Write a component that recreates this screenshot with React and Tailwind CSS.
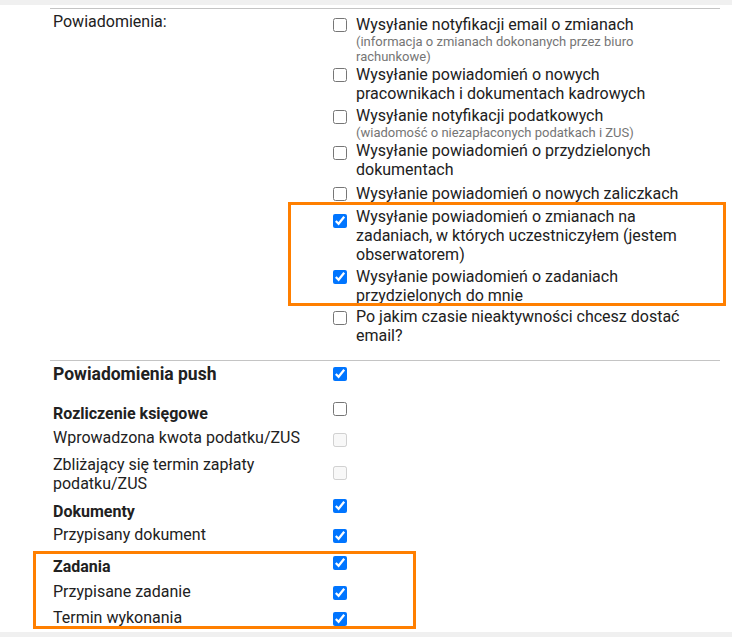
import React from 'react';

const emailRows = [
  { text: 'Wysyłanie notyfikacji email o zmianach', note: '(informacja o zmianach dokonanych przez biuro rachunkowe)', checked: false, mt: 'mt-[5.5px]', box: 'mt-[3.5px]' },
  { text: 'Wysyłanie powiadomień o nowych pracownikach i dokumentach kadrowych', checked: false, mt: 'mt-[1px]', box: 'mt-[3.5px]' },
  { text: 'Wysyłanie notyfikacji podatkowych', note: '(wiadomość o niezapłaconych podatkach i ZUS)', checked: false, mt: 'mt-[3.5px]', box: 'mt-[4px]' },
  { text: 'Wysyłanie powiadomień o przydzielonych dokumentach', checked: false, mt: 'mt-[1px]', box: 'mt-[5px]' },
  { text: 'Wysyłanie powiadomień o nowych zaliczkach', checked: false, mt: 'mt-[5px]', box: 'mt-[3px]' },
  { text: 'Wysyłanie powiadomień o zmianach na zadaniach, w których uczestniczyłem (jestem obserwatorem)', checked: true, mt: 'mt-[4px]', box: 'mt-[7px]' },
  { text: 'Wysyłanie powiadomień o zadaniach przydzielonych do mnie', checked: true, mt: 'mt-[2.5px]', box: 'mt-[3.5px]' },
  { text: 'Po jakim czasie nieaktywności chcesz dostać email?', checked: false, mt: 'mt-[2px]', box: 'mt-[4.5px]' },
];

const pushRows = [
  { label: 'Powiadomienia push', bold: true, big: true, checked: true, h: 'h-[38px]', pt: 'pt-[3px]', box: 'mt-[6px]' },
  { label: 'Rozliczenie księgowe', bold: true, checked: false, h: 'h-[26px]', pt: 'pt-[4.5px]', box: 'mt-[3px]' },
  { label: 'Wprowadzona kwota podatku/ZUS', disabled: true, h: 'h-[27px]', pt: 'pt-[2.5px]', box: 'mt-[8px]' },
  { label: 'Zbliżający się termin zapłaty podatku/ZUS', disabled: true, h: 'h-[45px]', pt: 'pt-[2.5px]', box: 'mt-[14px]' },
  { label: 'Dokumenty', bold: true, checked: true, h: 'h-[25px]', pt: 'pt-[4.5px]', box: 'mt-[2px]' },
  { label: 'Przypisany dokument', checked: true, h: 'h-[30px]', pt: 'pt-[2.5px]', box: 'mt-[7px]' },
  { label: 'Zadania', bold: true, checked: true, h: 'h-[27px]', pt: 'pt-[5px]', box: 'mt-[4px]' },
  { label: 'Przypisane zadanie', checked: true, h: 'h-[27px]', pt: 'pt-[2.5px]', box: 'mt-[7px]' },
  { label: 'Termin wykonania', checked: true, h: 'h-[26px]', pt: 'pt-[2px]', box: 'mt-[6px]' },
];

const Check = ({ checked, disabled, className }) => (
  <input
    type="checkbox"
    defaultChecked={checked}
    disabled={disabled}
    className={`m-0 w-[14px] h-[14px] shrink-0 accent-[#0075ff] ${className}`}
  />
);

export default function App() {
  return (
    <div className="w-[732px] min-h-[637px] bg-white text-[#212121] text-[16px] leading-[19px]" style={{ fontFamily: 'Roboto, "Liberation Sans", sans-serif' }}>
      <div className="h-[5px] bg-[#f0f0f0]" />
      <div className="ml-[50px] w-[670px]">
        <div className="h-[3px]" />
        <div className="h-px bg-[#c4c4c4]" />

        {/* Email notifications */}
        <div className="relative flex h-[351px]">
          <div className="w-[279px] pl-[3px] pt-[2.5px]">Powiadomienia:</div>
          <div className="flex flex-col">
            {emailRows.map(row => (
              <div key={row.text} className={`flex items-start ${row.mt}`}>
                <Check checked={row.checked} className={`ml-[4px] ${row.box}`} />
                <div className="ml-[9px] w-[334px]">
                  <div>{row.text}</div>
                  {row.note && <div className="text-[13px] leading-[15px] text-[#757575]">{row.note}</div>}
                </div>
              </div>
            ))}
          </div>
          <div className="absolute left-[238px] top-[193px] w-[438px] h-[104px] border-[3px] border-[#ff7f00] pointer-events-none" />
        </div>

        <div className="h-px bg-[#c4c4c4]" />

        {/* Push notifications */}
        <div className="relative">
          {pushRows.map(row => (
            <div key={row.label} className={`flex items-start ${row.h}`}>
              <div className={`w-[279px] pl-[3px] pr-[6px] ${row.pt} ${row.bold ? 'font-bold' : ''} ${row.big ? 'text-[17.5px] leading-[20px]' : ''}`}>{row.label}</div>
              <Check checked={row.checked} disabled={row.disabled} className={`ml-[4px] ${row.box}`} />
            </div>
          ))}
          <div className="absolute left-[-17px] top-[190px] w-[383px] h-[78px] border-[3px] border-[#ff7f00] pointer-events-none" />
        </div>
      </div>
      <div className="h-[5px] bg-[#f0f0f0]" />
    </div>
  );
}
